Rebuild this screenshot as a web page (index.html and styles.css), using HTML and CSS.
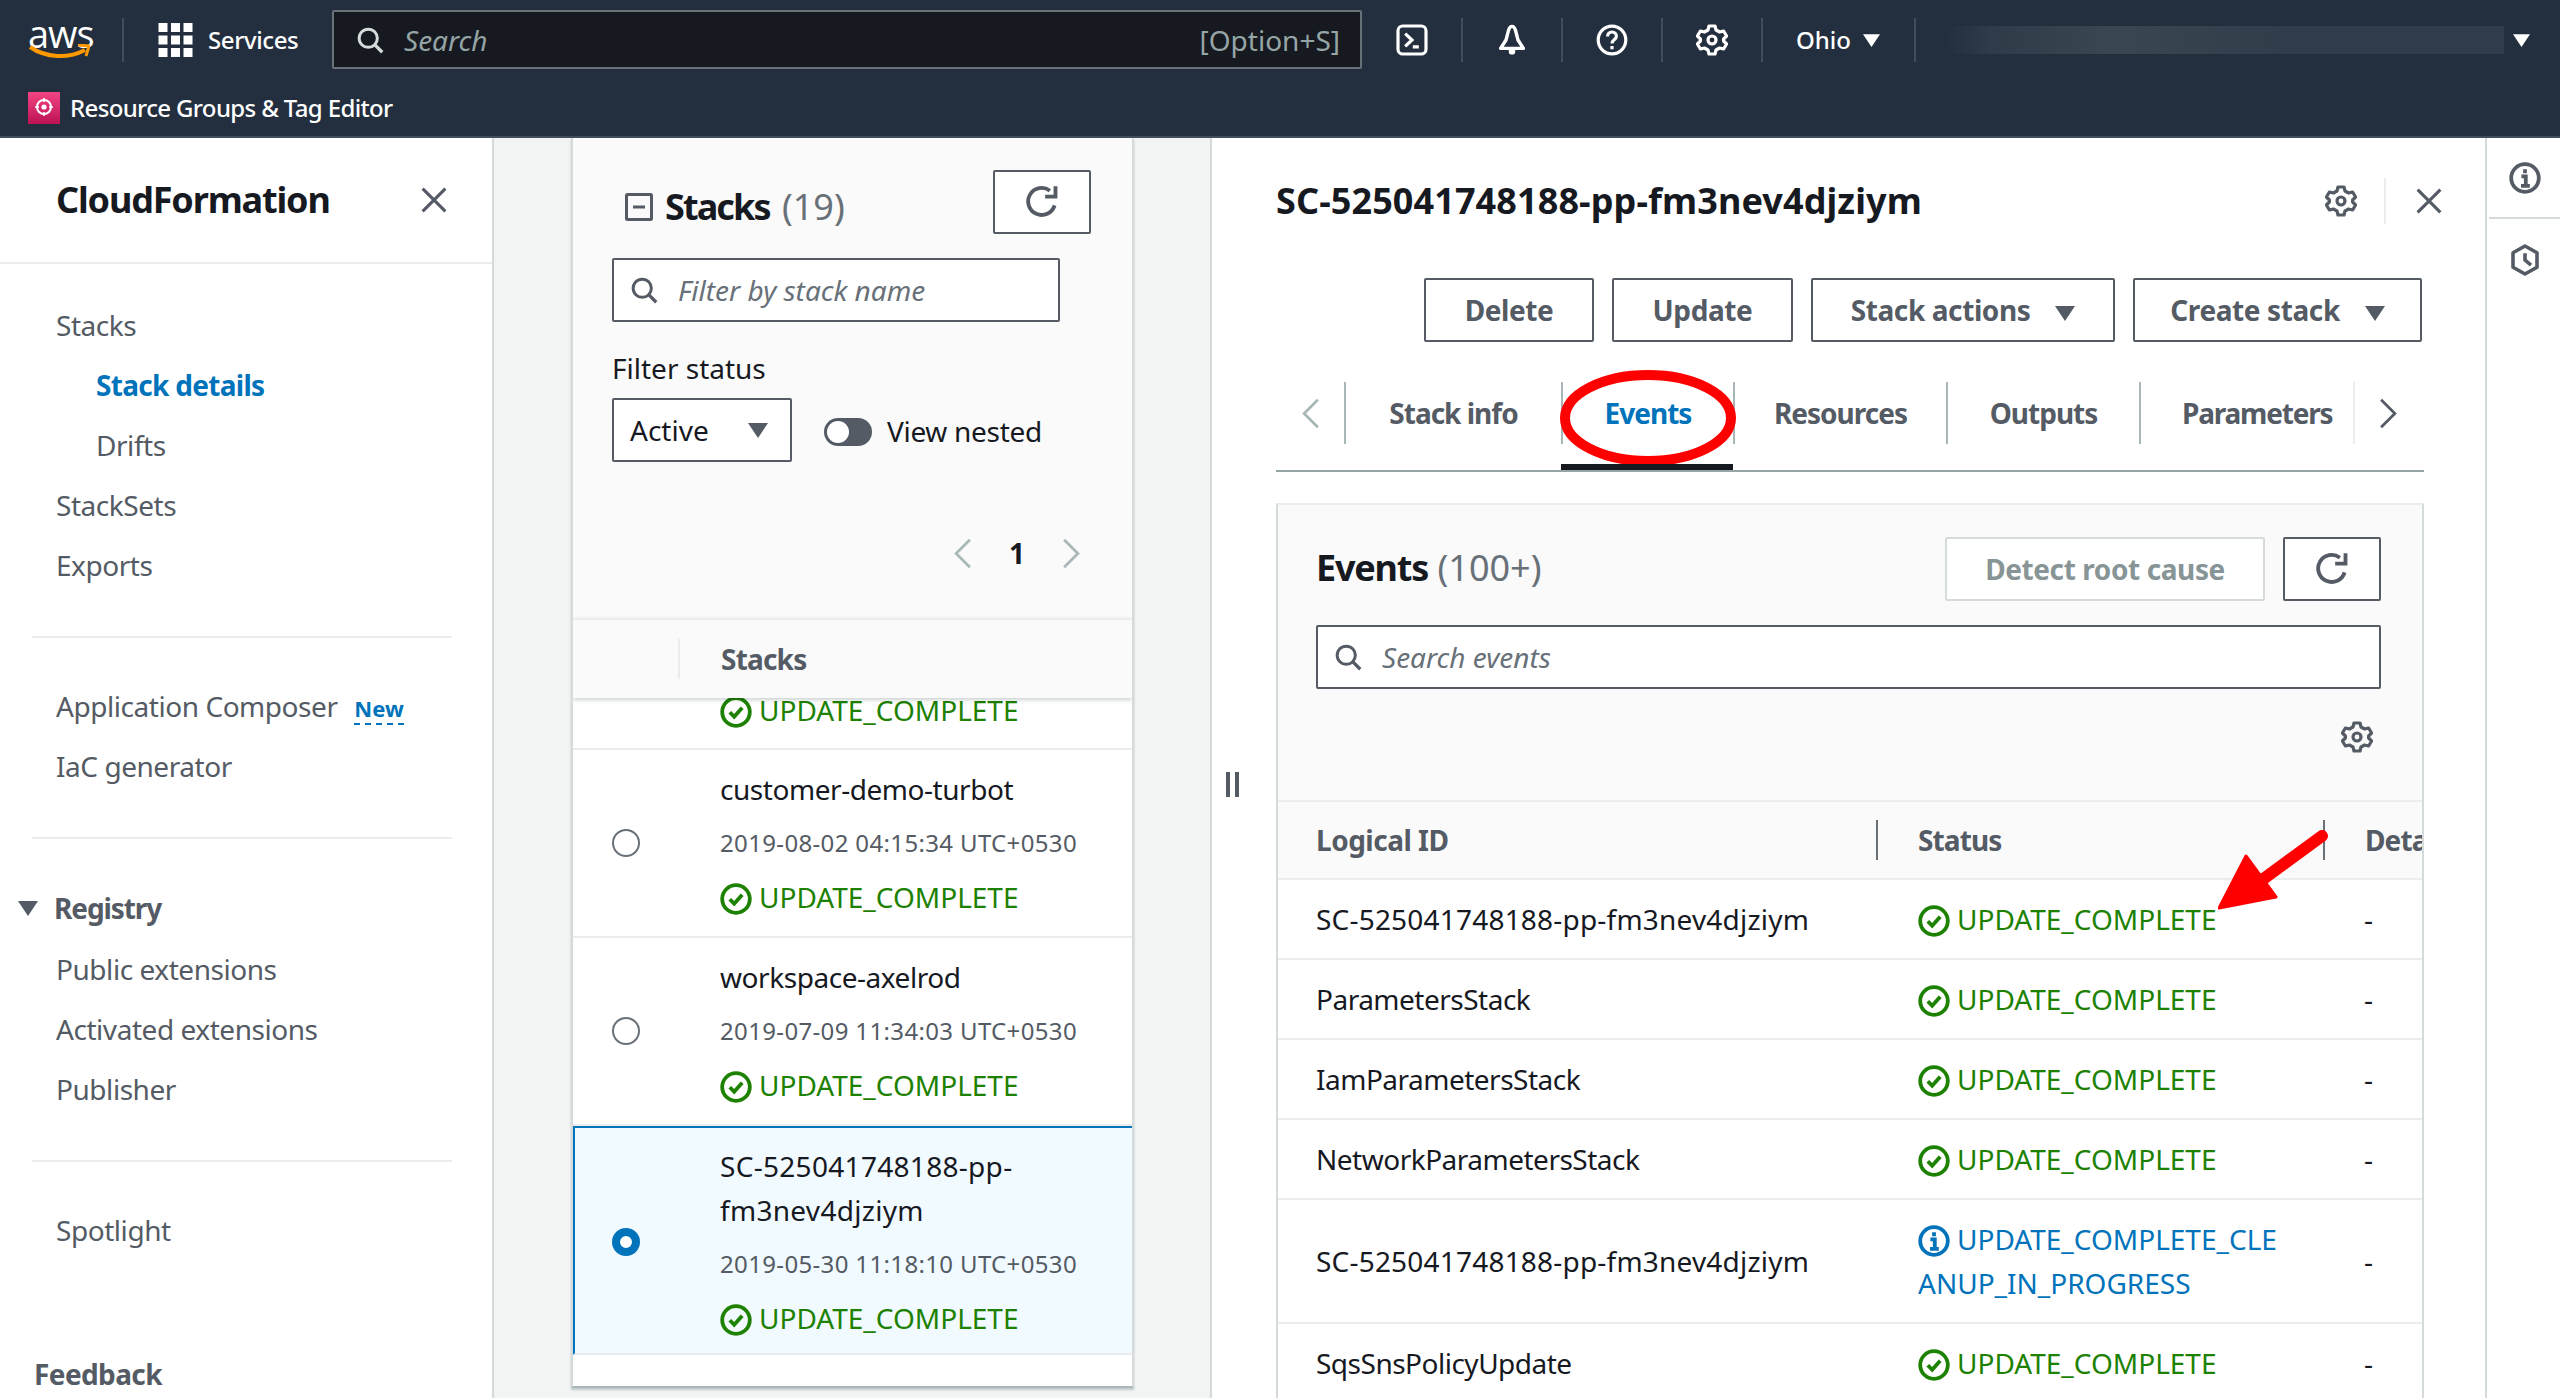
FILE: index.html
```html
<!DOCTYPE html>
<html lang="en">
<head>
    <meta charset="UTF-8">
    <title>CloudFormation - Stack details</title>
    <link rel="stylesheet" href="styles.css">
</head>
<body>

<svg class="defs" width="0" height="0">
    <symbol id="i-search" viewBox="0 0 16 16"><circle cx="7" cy="7" r="5.2" fill="none" stroke="currentColor" stroke-width="1.7"/><path d="M10.8 10.8L15 15" fill="none" stroke="currentColor" stroke-width="1.9"/></symbol>
    <symbol id="i-gear" viewBox="0 0 16 16"><path d="M6.5 1h3l.5 2 1.8 1 2-.5 1.5 2.5-1.5 1.5v1l1.5 1.5-1.5 2.5-2-.5-1.8 1-.5 2h-3l-.5-2-1.8-1-2 .5-1.5-2.5 1.5-1.5v-1L.7 6l1.5-2.5 2 .5 1.8-1z" fill="none" stroke="currentColor" stroke-width="1.6" stroke-linejoin="round"/><circle cx="8" cy="8" r="2" fill="none" stroke="currentColor" stroke-width="1.6"/></symbol>
    <symbol id="i-close" viewBox="0 0 16 16"><path d="M1.5 1.5l13 13M14.5 1.5l-13 13" fill="none" stroke="currentColor" stroke-width="1.8"/></symbol>
    <symbol id="i-refresh" viewBox="0 0 16 16"><path d="M13.6 9.5A6 6 0 1 1 11.5 3" fill="none" stroke="currentColor" stroke-width="1.7"/><path d="M14 1v4.6H9.4" fill="none" stroke="currentColor" stroke-width="1.7"/></symbol>
    <symbol id="i-ok" viewBox="0 0 16 16"><circle cx="8" cy="8" r="6.9" fill="none" stroke="currentColor" stroke-width="1.9"/><path d="M4.9 8.1l2.2 2.3 4-4.5" fill="none" stroke="currentColor" stroke-width="1.9"/></symbol>
    <symbol id="i-info" viewBox="0 0 16 16"><circle cx="8" cy="8" r="6.9" fill="none" stroke="currentColor" stroke-width="1.9"/><path d="M8 3.6v2M6.2 7.2H8.4v4.6M6 11.9h4.4" fill="none" stroke="currentColor" stroke-width="1.9"/></symbol>
    <symbol id="i-left" viewBox="0 0 16 24"><path d="M13 2L3 12l10 10" fill="none" stroke="currentColor" stroke-width="2"/></symbol>
    <symbol id="i-right" viewBox="0 0 16 24"><path d="M3 2l10 10L3 22" fill="none" stroke="currentColor" stroke-width="2"/></symbol>
    <symbol id="i-caret" viewBox="0 0 16 12"><path d="M0 0h16L8 12z" fill="currentColor"/></symbol>
</svg>

<div class="page">

    <header class="topbar">
        <div class="topbar-main">
            <div class="aws-logo">
                <span class="aws-text">aws</span>
                <svg class="aws-smile" viewBox="0 0 62 18"><path d="M2 3c16 11 38 12 55 3" fill="none" stroke="#f90" stroke-width="4"/><path d="M50 1l11 1-3 10" fill="none" stroke="#f90" stroke-width="3"/></svg>
            </div>
            <div class="services">
                <svg class="grid-icon" viewBox="0 0 34 34" fill="#fff">
                    <rect width="9" height="9"/><rect x="12.5" width="9" height="9"/><rect x="25" width="9" height="9"/>
                    <rect y="12.5" width="9" height="9"/><rect x="12.5" y="12.5" width="9" height="9"/><rect x="25" y="12.5" width="9" height="9"/>
                    <rect y="25" width="9" height="9"/><rect x="12.5" y="25" width="9" height="9"/><rect x="25" y="25" width="9" height="9"/>
                </svg>
                <span>Services</span>
            </div>
            <div class="top-search">
                <svg class="top-search-icon"><use href="#i-search"/></svg>
                <span class="top-search-text">Search</span>
                <span class="top-search-key">[Option+S]</span>
            </div>
            <div class="top-icon top-icon-first">
                <svg viewBox="0 0 16 16"><rect x="1" y="1" width="14" height="14" rx="2.4" fill="none" stroke="currentColor" stroke-width="1.6"/><path d="M4.6 4.8L8 8l-3.4 3.2M8.4 11.4h3" fill="none" stroke="currentColor" stroke-width="1.6"/></svg>
            </div>
            <div class="top-icon">
                <svg viewBox="0 0 16 16"><path d="M8 1.2c-1 0-1.5 1-1.8 2.2L5 8l-2.7 4.2h11.4L11 8 9.8 3.4C9.5 2.2 9 1.2 8 1.2z" fill="none" stroke="currentColor" stroke-width="1.7" stroke-linejoin="round"/><path d="M6.4 12.5v1.2a1.6 1.6 0 0 0 3.2 0v-1.2" fill="currentColor"/></svg>
            </div>
            <div class="top-icon">
                <svg viewBox="0 0 16 16"><circle cx="8" cy="8" r="6.9" fill="none" stroke="currentColor" stroke-width="1.6"/><path d="M5.8 6.2C5.8 4.9 6.8 4 8 4s2.2.9 2.2 2.1c0 1.8-2.2 1.8-2.2 3.6M8 11v1.6" fill="none" stroke="currentColor" stroke-width="1.6"/></svg>
            </div>
            <div class="top-icon">
                <svg><use href="#i-gear"/></svg>
            </div>
            <div class="region">
                <span>Ohio</span>
                <svg class="caret-small"><use href="#i-caret"/></svg>
            </div>
            <div class="account-blur"></div>
            <svg class="caret-small"><use href="#i-caret"/></svg>
        </div>
        <div class="topbar-sub">
            <span class="service-badge">
                <svg viewBox="0 0 32 32"><circle cx="16" cy="15" r="7" fill="none" stroke="#fff" stroke-width="2"/><circle cx="16" cy="15" r="2.6" fill="#fff"/><path d="M16 6v4M16 20v4M7 15h4M21 15h4" stroke="#fff" stroke-width="1.6"/></svg>
            </span>
            <span class="service-name">Resource Groups &amp; Tag Editor</span>
        </div>
    </header>

    <main class="layout">

        <nav class="sidebar">
            <div class="sidebar-head">
                <h2>CloudFormation</h2>
                <svg class="sidebar-close"><use href="#i-close"/></svg>
            </div>
            <ul class="nav-list nav-first">
                <li>Stacks</li>
                <li class="nested active">Stack details</li>
                <li class="nested">Drifts</li>
                <li>StackSets</li>
                <li>Exports</li>
            </ul>
            <hr class="nav-divider">
            <ul class="nav-list">
                <li>Application Composer <a class="new-tag">New</a></li>
                <li>IaC generator</li>
            </ul>
            <hr class="nav-divider">
            <div class="nav-group">
                <svg class="nav-caret"><use href="#i-caret"/></svg>
                <span>Registry</span>
            </div>
            <ul class="nav-list">
                <li>Public extensions</li>
                <li>Activated extensions</li>
                <li>Publisher</li>
            </ul>
            <hr class="nav-divider">
            <ul class="nav-list nav-last">
                <li>Spotlight</li>
            </ul>
            <div class="nav-feedback">Feedback</div>
        </nav>

        <section class="stacks-panel">
            <div class="stacks-top">
                <div class="stacks-title-row">
                    <svg class="collapse-icon" viewBox="0 0 28 28"><rect x="1.5" y="1.5" width="25" height="25" rx="1" fill="none" stroke="currentColor" stroke-width="3"/><path d="M8 14h12" stroke="currentColor" stroke-width="3"/></svg>
                    <h2 class="stacks-title"><span class="stacks-word">Stacks</span> <span class="count">(19)</span></h2>
                    <button class="icon-btn stacks-refresh"><svg><use href="#i-refresh"/></svg></button>
                </div>
                <div class="input-box filter-input">
                    <svg class="input-icon"><use href="#i-search"/></svg>
                    <span class="placeholder">Filter by stack name</span>
                </div>
                <div class="filter-label">Filter status</div>
                <div class="filter-row">
                    <div class="input-box select-box">
                        <span>Active</span>
                        <svg class="select-caret"><use href="#i-caret"/></svg>
                    </div>
                    <span class="toggle"><span class="toggle-knob"></span></span>
                    <span class="toggle-label">View nested</span>
                </div>
                <div class="pager">
                    <svg class="pager-arrow"><use href="#i-left"/></svg>
                    <span class="pager-num">1</span>
                    <svg class="pager-arrow"><use href="#i-right"/></svg>
                </div>
            </div>
            <div class="stacks-head">
                <span class="stacks-head-sep"></span>
                <span>Stacks</span>
            </div>
            <div class="stack-cut">
                <span class="status status-ok"><svg><use href="#i-ok"/></svg>UPDATE_COMPLETE</span>
            </div>
            <div class="stack-row">
                <span class="radio"></span>
                <div class="stack-info">
                    <div class="stack-name">customer-demo-turbot</div>
                    <div class="stack-date">2019-08-02 04:15:34 UTC+0530</div>
                    <span class="status status-ok"><svg><use href="#i-ok"/></svg>UPDATE_COMPLETE</span>
                </div>
            </div>
            <div class="stack-row">
                <span class="radio"></span>
                <div class="stack-info">
                    <div class="stack-name">workspace-axelrod</div>
                    <div class="stack-date">2019-07-09 11:34:03 UTC+0530</div>
                    <span class="status status-ok"><svg><use href="#i-ok"/></svg>UPDATE_COMPLETE</span>
                </div>
            </div>
            <div class="stack-row stack-selected">
                <span class="radio radio-on"></span>
                <div class="stack-info">
                    <div class="stack-name stack-name-num">SC-525041748188-pp-fm3nev4djziym</div>
                    <div class="stack-date">2019-05-30 11:18:10 UTC+0530</div>
                    <span class="status status-ok"><svg><use href="#i-ok"/></svg>UPDATE_COMPLETE</span>
                </div>
            </div>
        </section>

        <section class="detail">
            <div class="detail-rail"><span class="pause"></span></div>
            <div class="detail-body">
                <div class="detail-head">
                    <h1>SC-525041748188-pp-fm3nev4djziym</h1>
                    <svg class="detail-gear"><use href="#i-gear"/></svg>
                    <span class="detail-sep"></span>
                    <svg class="detail-close"><use href="#i-close"/></svg>
                </div>

                <div class="actions">
                    <button class="btn btn-delete">Delete</button>
                    <button class="btn btn-update">Update</button>
                    <button class="btn btn-menu btn-stack">Stack actions <svg><use href="#i-caret"/></svg></button>
                    <button class="btn btn-menu btn-create">Create stack <svg><use href="#i-caret"/></svg></button>
                </div>

                <div class="tabs">
                    <div class="tab-arrow tab-arrow-left"><svg><use href="#i-left"/></svg></div>
                    <div class="tab tab-info"><span class="tab-label">Stack info</span></div>
                    <div class="tab tab-events tab-active"><span class="tab-label">Events</span></div>
                    <div class="tab tab-resources"><span class="tab-label">Resources</span></div>
                    <div class="tab tab-outputs"><span class="tab-label">Outputs</span></div>
                    <div class="tab tab-params"><span class="tab-label">Parameters</span></div>
                    <div class="tab-arrow tab-arrow-right"><svg><use href="#i-right"/></svg></div>
                </div>

                <div class="events-card">
                    <div class="events-top">
                        <div class="events-title-row">
                            <h2 class="events-title"><span class="events-word">Events</span> <span class="count">(100+)</span></h2>
                            <button class="btn btn-disabled">Detect root cause</button>
                            <button class="icon-btn events-refresh"><svg><use href="#i-refresh"/></svg></button>
                        </div>
                        <div class="input-box events-search">
                            <svg class="input-icon"><use href="#i-search"/></svg>
                            <span class="placeholder">Search events</span>
                        </div>
                        <div class="events-gear-row"><svg class="events-gear"><use href="#i-gear"/></svg></div>
                    </div>
                    <div class="ev-row ev-head">
                        <div class="ev-cell ev-id">Logical ID</div>
                        <div class="ev-cell ev-th">Status</div>
                        <div class="ev-cell ev-th ev-detail-th">Detailed status</div>
                    </div>
                    <div class="ev-row">
                        <div class="ev-cell ev-id ev-id-num">SC-525041748188-pp-fm3nev4djziym</div>
                        <div class="ev-cell ev-status"><span class="status status-ok"><svg><use href="#i-ok"/></svg>UPDATE_COMPLETE</span></div>
                        <div class="ev-cell ev-dash">-</div>
                    </div>
                    <div class="ev-row">
                        <div class="ev-cell ev-id">ParametersStack</div>
                        <div class="ev-cell ev-status"><span class="status status-ok"><svg><use href="#i-ok"/></svg>UPDATE_COMPLETE</span></div>
                        <div class="ev-cell ev-dash">-</div>
                    </div>
                    <div class="ev-row">
                        <div class="ev-cell ev-id">IamParametersStack</div>
                        <div class="ev-cell ev-status"><span class="status status-ok"><svg><use href="#i-ok"/></svg>UPDATE_COMPLETE</span></div>
                        <div class="ev-cell ev-dash">-</div>
                    </div>
                    <div class="ev-row">
                        <div class="ev-cell ev-id">NetworkParametersStack</div>
                        <div class="ev-cell ev-status"><span class="status status-ok"><svg><use href="#i-ok"/></svg>UPDATE_COMPLETE</span></div>
                        <div class="ev-cell ev-dash">-</div>
                    </div>
                    <div class="ev-row ev-row-tall">
                        <div class="ev-cell ev-id ev-id-num">SC-525041748188-pp-fm3nev4djziym</div>
                        <div class="ev-cell ev-status"><span class="status status-info"><svg><use href="#i-info"/></svg>UPDATE_COMPLETE_CLE<br>ANUP_IN_PROGRESS</span></div>
                        <div class="ev-cell ev-dash">-</div>
                    </div>
                    <div class="ev-row">
                        <div class="ev-cell ev-id">SqsSnsPolicyUpdate</div>
                        <div class="ev-cell ev-status"><span class="status status-ok"><svg><use href="#i-ok"/></svg>UPDATE_COMPLETE</span></div>
                        <div class="ev-cell ev-dash">-</div>
                    </div>
                </div>
            </div>
        </section>

        <aside class="tools">
            <div class="tools-cell">
                <svg><use href="#i-info"/></svg>
            </div>
            <div class="tools-cell">
                <svg viewBox="0 0 16 16"><path d="M8 1l6 3.4v7.2L8 15l-6-3.4V4.4z" fill="none" stroke="currentColor" stroke-width="1.8" stroke-linejoin="round"/><path d="M8 4.6V8l3 2.6" fill="none" stroke="currentColor" stroke-width="1.8"/></svg>
            </div>
        </aside>
    </main>

    <!-- anotacoes em vermelho por cima do print -->
    <svg class="mark-circle" viewBox="0 0 176 94"><ellipse cx="88" cy="48" rx="83" ry="43" fill="none" stroke="#f00" stroke-width="10"/></svg>
    <svg class="mark-arrow" viewBox="0 0 120 84"><path d="M104 8L44 52" fill="none" stroke="#f00" stroke-width="12" stroke-linecap="round"/><path d="M1 80L28 28 58 69z" fill="#f00" stroke="#f00" stroke-width="3" stroke-linejoin="round"/></svg>
</div>

</body>
</html>
```

FILE: styles.css
```css
* {
    box-sizing: border-box;
    margin: 0;
    padding: 0;
}
body {
    font-family: "Noto Sans", "Open Sans", sans-serif;
    font-size: 28px;
    line-height: 44px;
    color: #16191f;
    background-color: #f2f3f3;
    overflow: hidden;
}
ul {
    list-style: none;
}
button {
    font-family: inherit;
    background-color: white;
}
.defs {
    display: block;
    height: 0;
}
.page {
    position: relative;
    width: 2560px;
    height: 1398px;
    overflow: hidden;
}

/* barra do topo */
.topbar {
    height: 138px;
    background-color: #232f3e;
    border-bottom: 2px solid #414d5c;
    color: white;
}
.topbar-main {
    display: flex;
    align-items: center;
    height: 80px;
    padding-left: 28px;
}
.aws-logo {
    width: 96px;
    height: 44px;
    position: relative;
    border-right: 2px solid #414d5c;
    margin-right: 34px;
}
.aws-text {
    display: block;
    font-family: "Open Sans", sans-serif;
    font-size: 38px;
    line-height: 30px;
    letter-spacing: -1px;
}
.aws-smile {
    position: absolute;
    left: 0;
    top: 26px;
    width: 62px;
    height: 18px;
}
.services {
    display: flex;
    align-items: center;
    gap: 15px;
    width: 174px;
    font-size: 24px;
    font-weight: 500;
    letter-spacing: -0.4px;
}
.grid-icon {
    width: 35px;
    height: 34px;
}
.top-search {
    display: flex;
    align-items: center;
    width: 1030px;
    height: 59px;
    margin-top: -1px;
    padding: 0 20px 0 22px;
    background-color: #16191f;
    border: 2px solid #687078;
    border-radius: 2px;
    color: #95a5a6;
}
.top-search-icon {
    width: 28px;
    height: 28px;
    color: #d5dbdb;
}
.top-search-text {
    flex: 1;
    margin-left: 20px;
    font-style: italic;
}
.top-icon {
    display: flex;
    align-items: center;
    justify-content: center;
    width: 100px;
    height: 44px;
    border-right: 2px solid #414d5c;
}
.top-icon-first {
    width: 101px;
}
.top-icon svg {
    width: 32px;
    height: 32px;
}
.region {
    display: flex;
    align-items: center;
    gap: 12px;
    height: 44px;
    width: 153px;
    padding-left: 33px;
    border-right: 2px solid #414d5c;
    font-size: 24px;
    font-weight: 500;
    margin-right: 30px;
}
.caret-small {
    width: 17px;
    height: 13px;
    flex-shrink: 0;
}
.account-blur {
    width: 558px;
    height: 28px;
    margin-right: 9px;
    background: linear-gradient(90deg, #232f3e 0, #303b49 8%, #3b4653 30%, #323d4b 60%, #323d4b 100%);
}
.topbar-sub {
    display: flex;
    align-items: center;
    gap: 10px;
    height: 56px;
    padding-left: 28px;
    font-size: 24px;
    font-weight: 500;
}
.service-name {
    letter-spacing: -0.64px;
}
.service-badge {
    display: block;
    width: 32px;
    height: 32px;
    background: linear-gradient(0deg, #bc1356, #f34482);
}
.service-badge svg {
    display: block;
    width: 32px;
    height: 32px;
}

/* layout geral */
.layout {
    display: flex;
    height: 1260px;
}

/* menu lateral */
.sidebar {
    width: 494px;
    flex-shrink: 0;
    background-color: white;
    border-right: 2px solid #d5dbdb;
    color: #545b64;
}
.sidebar-head {
    display: flex;
    align-items: center;
    justify-content: space-between;
    height: 126px;
    padding: 0 44px 0 56px;
    border-bottom: 2px solid #eaeded;
    color: #16191f;
}
.sidebar-head h2 {
    font-size: 36px;
    font-weight: 700;
    letter-spacing: -1.15px;
}
.sidebar-close {
    width: 28px;
    height: 28px;
    color: #545b64;
}
.nav-list {
    padding-left: 56px;
    letter-spacing: -0.45px;
}
.nav-list li {
    height: 60px;
    line-height: 60px;
}
.nav-first {
    padding-top: 31px;
}
.nav-last {
    margin-top: 3px;
}
.nested {
    padding-left: 40px;
}
.active {
    color: #0073bb;
    font-weight: 700;
    letter-spacing: -0.7px;
}
.nav-divider {
    border: none;
    border-top: 2px solid #eaeded;
    margin: 41px 40px 38px 32px;
}
.new-tag {
    margin-left: 10px;
    color: #0073bb;
    font-size: 22px;
    font-weight: 700;
    letter-spacing: 0;
    border-bottom: 2px dashed #0073bb;
}
.nav-group {
    display: flex;
    align-items: center;
    height: 62px;
    padding-left: 18px;
    font-weight: 700;
    letter-spacing: -1.1px;
    margin-top: 5px;
}
.nav-caret {
    width: 20px;
    height: 15px;
    margin-right: 16px;
}
.nav-feedback {
    height: 60px;
    line-height: 60px;
    margin-top: 84px;
    padding-left: 34px;
    font-weight: 700;
    letter-spacing: -0.6px;
}

/* painel da lista de stacks */
.stacks-panel {
    width: 563px;
    height: 1250px;
    flex-shrink: 0;
    margin-left: 77px;
    background-color: white;
    border-left: 2px solid #d5dbdb;
    border-right: 2px solid #d5dbdb;
    border-bottom: 2px solid #aab7b8;
    box-shadow: 0 2px 2px rgba(0, 28, 36, 0.2);
    overflow: hidden;
}
.stacks-top {
    background-color: #fafafa;
    height: 480px;
    padding: 32px 41px 0 39px;
}
.stacks-title-row {
    display: flex;
    align-items: center;
    height: 64px;
    color: #16191f;
}
.collapse-icon {
    width: 28px;
    height: 28px;
    margin: 10px 12px 0 13px;
    color: #545b64;
}
.stacks-title {
    flex: 1;
    font-size: 36px;
    font-weight: 700;
    margin-top: 10px;
}
.stacks-word {
    letter-spacing: -1.9px;
    margin-right: 3px;
}
.events-word {
    letter-spacing: -1.2px;
}
.count {
    font-weight: 400;
    color: #687078;
}
.icon-btn {
    display: flex;
    align-items: center;
    justify-content: center;
    height: 64px;
    border: 2px solid #545b64;
    border-radius: 2px;
    color: #545b64;
}
.icon-btn svg {
    width: 36px;
    height: 36px;
}
.stacks-refresh {
    width: 98px;
}
.input-box {
    display: flex;
    align-items: center;
    height: 64px;
    background-color: white;
    border: 2px solid #545b64;
    border-radius: 2px;
}
.input-icon {
    width: 28px;
    height: 28px;
    margin-left: 16px;
    flex-shrink: 0;
    color: #545b64;
}
.placeholder {
    margin-left: 20px;
    font-style: italic;
    color: #687078;
}
.filter-input {
    width: 448px;
    margin-top: 24px;
}
.filter-label {
    height: 40px;
    line-height: 40px;
    margin-top: 26px;
}
.filter-row {
    display: flex;
    align-items: center;
    margin-top: 10px;
}
.select-box {
    width: 180px;
    padding: 0 22px 0 16px;
    justify-content: space-between;
    line-height: 40px;
}
.select-caret {
    width: 20px;
    height: 15px;
    color: #545b64;
}
.toggle {
    display: block;
    width: 48px;
    height: 28px;
    margin: 4px 0 0 32px;
    padding: 3px;
    background-color: #545b64;
    border-radius: 14px;
}
.toggle-knob {
    display: block;
    width: 22px;
    height: 22px;
    background-color: white;
    border-radius: 50%;
}
.toggle-label {
    margin: 2px 0 0 15px;
    letter-spacing: -0.3px;
}
.pager {
    display: flex;
    align-items: center;
    justify-content: flex-end;
    height: 40px;
    margin-top: 71px;
    padding-right: 9px;
    gap: 35px;
    color: #aab7b8;
}
.pager-arrow {
    width: 22px;
    height: 33px;
}
.pager-num {
    color: #16191f;
    font-weight: 700;
}
.stacks-head {
    position: relative;
    z-index: 1;
    display: flex;
    align-items: center;
    height: 80px;
    background-color: #fafafa;
    border-top: 2px solid #eaeded;
    box-shadow: 0 2px 4px rgba(0, 28, 36, 0.2);
    color: #545b64;
    font-weight: 700;
    letter-spacing: -0.8px;
}
.stacks-head-sep {
    width: 2px;
    height: 40px;
    margin: 0 41px 0 105px;
    background-color: #eaeded;
}
.stack-cut {
    display: flex;
    align-items: flex-end;
    height: 52px;
    padding: 0 0 16px 147px;
    border-bottom: 2px solid #eaeded;
    overflow: hidden;
}
.stack-row {
    display: flex;
    align-items: center;
    padding: 17px 0;
    border-bottom: 2px solid #eaeded;
}
.radio {
    display: block;
    width: 28px;
    height: 28px;
    margin: 0 80px 0 39px;
    flex-shrink: 0;
    background-color: white;
    border: 2px solid #687078;
    border-radius: 50%;
}
.radio-on {
    background-color: white;
    border: 8px solid #0073bb;
}
.stack-info {
    display: flex;
    flex-direction: column;
    gap: 10px;
    width: 370px;
}
.stack-name {
    letter-spacing: -0.45px;
}
.stack-name-num {
    letter-spacing: 0.3px;
}
.stack-date {
    font-size: 24px;
    color: #545b64;
    letter-spacing: 0.35px;
}
.stack-selected {
    padding: 16px 0 13px;
    background-color: #f1faff;
    border-top: 2px solid #0073bb;
    border-left: 2px solid #0073bb;
}
.stack-selected .radio {
    margin-left: 37px;
}
.status {
    display: block;
    white-space: nowrap;
}
.status svg {
    width: 32px;
    height: 32px;
    margin-right: 7px;
    vertical-align: -7px;
}
.status-ok {
    color: #1d8102;
}
.status-info {
    color: #0073bb;
}

/* painel de detalhes */
.detail {
    display: flex;
    flex: 1;
    min-width: 0;
    margin-left: 76px;
    background-color: white;
    border-left: 2px solid #d5dbdb;
}
.detail-rail {
    display: flex;
    align-items: center;
    width: 64px;
    padding: 32px 0 0 14px;
}
.pause {
    display: block;
    width: 13px;
    height: 25px;
    border-left: 4px solid #545b64;
    border-right: 4px solid #545b64;
}
.detail-body {
    flex: 1;
    padding-right: 61px;
    min-width: 0;
}
.detail-head {
    display: flex;
    align-items: center;
    height: 126px;
    margin-right: -19px;
}
.detail-head h1 {
    flex: 1;
    font-size: 36px;
    font-weight: 700;
    letter-spacing: 0.1px;
}
.detail-gear {
    width: 32px;
    height: 32px;
    color: #545b64;
}
.detail-sep {
    width: 2px;
    height: 46px;
    margin: 0 29px 0 27px;
    background-color: #eaeded;
}
.detail-close {
    width: 28px;
    height: 28px;
    color: #545b64;
}
.actions {
    display: flex;
    justify-content: flex-end;
    gap: 18px;
    height: 64px;
    margin-top: 14px;
    padding-right: 2px;
}
.btn {
    height: 64px;
    padding: 0 40px;
    font-size: 28px;
    font-weight: 700;
    letter-spacing: -0.4px;
    color: #545b64;
    border: 2px solid #545b64;
    border-radius: 2px;
}
.btn-delete {
    width: 170px;
    padding: 0;
}
.btn-update {
    width: 181px;
    padding: 0;
}
.btn-stack {
    width: 304px;
    padding: 0;
}
.btn-create {
    width: 289px;
    padding: 0;
}
.btn-menu svg {
    width: 20px;
    height: 15px;
    margin-left: 18px;
}
.btn-disabled {
    width: 320px;
    padding: 0;
    color: #879596;
    border-color: #d5dbdb;
}
.tabs {
    display: flex;
    height: 90px;
    margin-top: 40px;
    border-bottom: 2px solid #95a5a6;
    color: #545b64;
    font-weight: 700;
    letter-spacing: -1px;
}
.tab {
    height: 88px;
    border-bottom: 6px solid transparent;
}
.tab-label {
    display: flex;
    align-items: center;
    justify-content: center;
    height: 62px;
    border-left: 2px solid #aab7b8;
}
.tab-active {
    border-bottom-color: #16191f;
}
.tab-active .tab-label {
    color: #0073bb;
}
.tab-info { width: 217px; }
.tab-events { width: 172px; }
.tab-resources { width: 213px; }
.tab-outputs { width: 193px; }
.tab-params { width: 214px; }
.tab-params .tab-label {
    justify-content: flex-start;
    padding-left: 41px;
    letter-spacing: -1.2px;
}
.tab-arrow {
    display: flex;
    align-items: center;
    height: 62px;
}
.tab-arrow-left {
    width: 68px;
    padding-left: 24px;
    color: #aab7b8;
}
.tab-arrow-right {
    width: 71px;
    padding-left: 22px;
    border-left: 2px solid #eaeded;
    color: #545b64;
}
.tab-arrow svg {
    width: 22px;
    height: 33px;
}

/* card de eventos */
.events-card {
    margin-top: 31px;
    height: 900px;
    border: 2px solid #d5dbdb;
    border-top-color: #eaeded;
    border-bottom: none;
    overflow: hidden;
}
.events-top {
    height: 295px;
    padding: 32px 41px 0 38px;
    background-color: #fafafa;
}
.events-title-row {
    display: flex;
    align-items: center;
    height: 64px;
    gap: 18px;
}
.events-title {
    flex: 1;
    font-size: 36px;
    font-weight: 700;
    margin-bottom: 3px;
}
.events-refresh {
    width: 98px;
}
.events-search {
    margin-top: 24px;
}
.events-gear-row {
    display: flex;
    justify-content: flex-end;
    height: 40px;
    margin-top: 28px;
    padding: 4px 8px 0 0;
}
.events-gear {
    width: 32px;
    height: 32px;
    color: #545b64;
}
.ev-row {
    display: grid;
    grid-template-columns: 598px 447px 1fr;
    align-items: center;
    height: 80px;
    background-color: white;
    border-bottom: 2px solid #eaeded;
}
.ev-row-tall {
    height: 124px;
}
.ev-head {
    height: 80px;
    background-color: #fafafa;
    border-top: 2px solid #eaeded;
    color: #545b64;
    font-weight: 700;
    letter-spacing: -0.9px;
}
.ev-cell {
    white-space: nowrap;
    overflow: hidden;
}
.ev-id {
    padding-left: 38px;
    letter-spacing: -0.5px;
}
.ev-id-num {
    letter-spacing: 0.2px;
}
.ev-th {
    height: 40px;
    line-height: 40px;
    padding-left: 40px;
    border-left: 2px solid #687078;
}
.ev-detail-th {
    width: 103px;
}
.ev-status {
    padding-left: 42px;
}
.ev-dash {
    padding-left: 41px;
}

/* barra direita */
.tools {
    width: 75px;
    flex-shrink: 0;
    background-color: white;
    border-left: 2px solid #d5dbdb;
    color: #545b64;
    padding-left: 2px;
}
.tools-cell {
    display: flex;
    align-items: center;
    justify-content: center;
    height: 81px;
    border-bottom: 2px solid #d5dbdb;
}
.tools-cell + .tools-cell {
    border-bottom: none;
}
.tools-cell svg {
    width: 32px;
    height: 32px;
}

/* anotacoes */
.mark-circle {
    position: absolute;
    left: 1560px;
    top: 370px;
    width: 176px;
    height: 94px;
}
.mark-arrow {
    position: absolute;
    left: 2218px;
    top: 828px;
    width: 120px;
    height: 84px;
}
```
